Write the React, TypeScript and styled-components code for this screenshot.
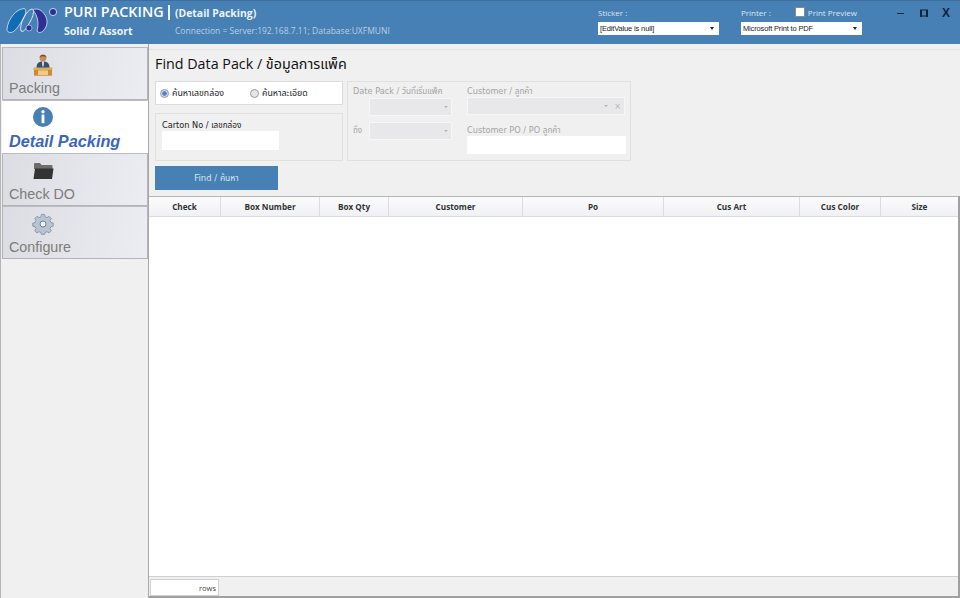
import React from "react";
import styled, { createGlobalStyle } from "styled-components";

const FONT = `"DejaVu Sans", "Noto Sans", "Noto Sans Thai", sans-serif`;

const GlobalStyle = createGlobalStyle`
  html, body {
    margin: 0;
    padding: 0;
    background: #f0f0f0;
    overflow: hidden;
  }
  * {
    box-sizing: border-box;
  }
`;

const Window = styled.div`
  width: 960px;
  height: 598px;
  display: flex;
  flex-direction: column;
  font-family: ${FONT};
  background: #f0f0f0;
`;

// Title bar
const TitleBar = styled.header`
  height: 44px;
  flex: none;
  display: flex;
  background: #4680b4;
  border-top: 1px solid #3e6f9c;
  color: #fff;
`;

const Logo = styled.svg`
  width: 52px;
  height: 28px;
  margin: 6px 0 0 6px;
  flex: none;
`;

const Brand = styled.div`
  width: 111px;
  margin-left: 6px;
  padding-top: 2px;
  flex: none;
`;

const BrandName = styled.div`
  font-family: "Open Sans", sans-serif;
  font-size: 14.4px;
  line-height: 18px;
  font-weight: 600;
  white-space: nowrap;
`;

const BrandSub = styled.div`
  font-family: "Open Sans", sans-serif;
  font-size: 10.5px;
  font-weight: 700;
  line-height: 14px;
  margin-top: 3px;
  color: #eef3f8;
  white-space: nowrap;
`;

const TitleInfo = styled.div`
  width: 423px;
  flex: none;
  padding-top: 5px;
`;

const PageName = styled.div`
  position: relative;
  font-family: "Open Sans", sans-serif;
  font-size: 10.4px;
  font-weight: 700;
  line-height: 14px;
  color: #eef3f8;
  &::before {
    content: "";
    position: absolute;
    left: -7px;
    top: -1px;
    width: 2px;
    height: 15px;
    background: #eef3f8;
  }
`;

const Connection = styled.div`
  font-family: "Open Sans", sans-serif;
  font-size: 8.5px;
  line-height: 12px;
  margin-top: 5px;
  color: #b9cfe2;
  white-space: nowrap;
`;

const Field = styled.div<{ $width: number }>`
  width: ${(p) => p.$width}px;
  flex: none;
  padding-top: 4px;
`;

const FieldHead = styled.div`
  height: 14px;
  display: flex;
  align-items: center;
  font-family: "Open Sans", sans-serif;
  font-size: 8px;
  color: #dce8f2;
  white-space: nowrap;
`;

const PreviewCheck = styled.span`
  width: 10px;
  height: 10px;
  margin: 0 3px 0 24px;
  background: #fff;
  border: 1px solid #8a8a8a;
  border-radius: 1px;
`;

const ComboBox = styled.div<{ $width: number }>`
  width: ${(p) => p.$width}px;
  height: 13px;
  margin-top: 3px;
  padding: 0 5px 0 2px;
  display: flex;
  align-items: center;
  justify-content: space-between;
  background: #fff;
  color: #222;
  font-family: "Liberation Sans", sans-serif;
  font-size: 7.5px;
  letter-spacing: -0.15px;
  white-space: nowrap;
  &::after {
    content: "";
    border-top: 3px solid #222;
    border-left: 2.5px solid transparent;
    border-right: 2.5px solid transparent;
  }
`;

const WindowButtons = styled.div`
  display: flex;
  align-items: center;
  height: 24px;
  gap: 15px;
  margin-left: 9px;
`;

const WinGlyph = styled.svg`
  width: 8px;
  height: 8px;
`;

const CloseGlyph = styled.span`
  font-family: "Liberation Sans", sans-serif;
  font-size: 12px;
  font-weight: 700;
  color: #10233a;
  margin-left: -1px;
`;

// Body
const Body = styled.div`
  flex: 1;
  min-height: 0;
  display: flex;
`;

const Sidebar = styled.nav`
  width: 148px;
  flex: none;
  padding: 3px 0 0 2px;
  background: #f0f0f0;
  border-left: 1px solid #b4b4b4;
`;

const NavItem = styled.div<{ $active?: boolean }>`
  height: 53px;
  margin-left: -1px;
  display: flex;
  flex-direction: column;
  padding: 5px 0 0 6px;
  background: ${(p) =>
    p.$active ? "#fff" : "linear-gradient(100deg, #dcdde2, #ecedf2)"};
  border-top: 1px solid #bcbcc0;
  border-bottom: ${(p) => (p.$active ? "0" : "1px solid #b4b4b8")};
  border-left: 1px solid ${(p) => (p.$active ? "#fff" : "#b4b4b8")};
  border-right: 1px solid ${(p) => (p.$active ? "#fff" : "#b4b4b8")};
`;

const NavIcon = styled.svg`
  width: 24px;
  height: 24px;
  margin-left: 22px;
  flex: none;
`;

const NavLabel = styled.span<{ $active?: boolean }>`
  font-family: "Liberation Sans", sans-serif;
  font-size: ${(p) => (p.$active ? 16.3 : 14.3)}px;
  font-weight: ${(p) => (p.$active ? 700 : 400)};
  font-style: ${(p) => (p.$active ? "italic" : "normal")};
  color: ${(p) => (p.$active ? "#3b66bd" : "#7c7c7c")};
  line-height: 18px;
  margin-top: 2px;
  white-space: nowrap;
`;

const Main = styled.main`
  flex: 1;
  min-width: 0;
  display: flex;
  flex-direction: column;
  padding-top: 5px;
  border-left: 1px solid #a8a8a8;
`;

const Finder = styled.section`
  height: 147px;
  flex: none;
  padding: 2px 0 0 6px;
  border-top: 1px solid #e2e2e2;
`;

const FinderTitle = styled.h1`
  margin: 0;
  font-family: "Open Sans", "Noto Sans Thai", sans-serif;
  font-size: 14.3px;
  font-weight: 400;
  line-height: 24px;
  color: #111;
`;

const FilterRow = styled.div`
  display: flex;
  gap: 4px;
  margin-top: 5px;
  height: 80px;
`;

const LeftColumn = styled.div`
  width: 188px;
  display: flex;
  flex-direction: column;
  gap: 8px;
`;

const RadioBox = styled.div`
  height: 24px;
  display: flex;
  align-items: center;
  padding-left: 4px;
  background: #fff;
  border: 1px solid #dcdcdc;
`;

const RadioOption = styled.label<{ $width: number }>`
  width: ${(p) => p.$width}px;
  display: flex;
  align-items: center;
  gap: 3px;
  font-size: 8.8px;
  color: #222;
  white-space: nowrap;
`;

const RadioDot = styled.span<{ $checked?: boolean }>`
  width: 9px;
  height: 9px;
  border-radius: 50%;
  background: ${(p) =>
    p.$checked
      ? "radial-gradient(circle, #5a7fd0 0 40%, #cdd6ee 50%)"
      : "#e6e6e6"};
  border: 1px solid #9a9aa2;
`;

const CartonBox = styled.div`
  flex: 1;
  padding: 5px 0 0 6px;
  border: 1px solid #e0e0e0;
`;

const FormLabel = styled.div<{ $disabled?: boolean }>`
  font-size: 8.2px;
  line-height: 12px;
  color: ${(p) => (p.$disabled ? "#a4a4a4" : "#222")};
  white-space: nowrap;
`;

const WhiteInput = styled.div<{ $width: number; $height: number }>`
  width: ${(p) => p.$width}px;
  height: ${(p) => p.$height}px;
  background: #fff;
`;

const DisabledGroup = styled.div`
  width: 284px;
  display: flex;
  padding: 3px 0 0 5px;
  border: 1px solid #e0e0e0;
`;

const DateColumn = styled.div`
  width: 114px;
  flex: none;
`;

const CustomerColumn = styled.div`
  flex: 1;
`;

const DateLine = styled.div`
  display: flex;
  align-items: center;
  height: 18px;
  margin-top: 1px;
  & + & {
    margin-top: 6px;
  }
`;

const DateLabel = styled.span`
  width: 16px;
  font-size: 8px;
  color: #a4a4a4;
`;

const DisabledSelect = styled.div<{ $width: number }>`
  width: ${(p) => p.$width}px;
  height: 18px;
  display: flex;
  align-items: center;
  justify-content: flex-end;
  gap: 6px;
  padding-right: 3px;
  background: #e8e8ea;
  border: 1px solid #f6f6f6;
  color: #b4b4b4;
  font-size: 8px;
  &::before {
    content: "";
    border-top: 2px solid #b4b4b4;
    border-left: 2px solid transparent;
    border-right: 2px solid transparent;
  }
`;

const PoLabel = styled(FormLabel)`
  margin: 9px 0 0;
`;

const FindButton = styled.button`
  display: block;
  width: 123px;
  height: 24px;
  margin-top: 5px;
  padding: 0;
  border: 0;
  background: #4680b4;
  color: #d8e6f1;
  font-family: ${FONT};
  font-size: 8.5px;
`;

// Grid
const DataGrid = styled.section`
  flex: 1;
  min-height: 0;
  display: flex;
  flex-direction: column;
  background: #fff;
  border-top: 1px solid #b4b4b4;
  border-right: 2px solid #a0a0a0;
  border-bottom: 2px solid #a0a0a0;
`;

const GridHeader = styled.div`
  height: 20px;
  flex: none;
  display: grid;
  grid-template-columns: 72px 99px 69px 134px 141px 136px 81px 1fr;
  background: linear-gradient(#fbfbfc, #f0f1f4);
  border-bottom: 1px solid #dcdcdc;
`;

const HeaderCell = styled.div`
  display: flex;
  align-items: center;
  justify-content: center;
  font-family: "Open Sans", sans-serif;
  font-size: 8.2px;
  font-weight: 700;
  color: #333;
  border-right: 1px solid #dcdcdc;
  &:last-child {
    border-right: 0;
  }
`;

const GridRows = styled.div`
  flex: 1;
`;

const GridFooter = styled.div`
  height: 20px;
  flex: none;
  padding: 2px 0 0 1px;
  background: #f0f0f0;
  border-top: 1px solid #cfcfcf;
`;

const RowCount = styled.div`
  width: 69px;
  height: 17px;
  display: flex;
  align-items: center;
  justify-content: flex-end;
  padding-right: 2px;
  background: #fff;
  border: 1px solid #d0d0d0;
  font-family: "Open Sans", sans-serif;
  font-size: 7.5px;
  color: #444;
`;

const COLUMNS = [
  "Check",
  "Box Number",
  "Box Qty",
  "Customer",
  "Po",
  "Cus Art",
  "Cus Color",
  "Size",
];

const DeskIcon = () => (
  <NavIcon viewBox="0 0 24 24">
    <circle cx="12" cy="5" r="3.4" fill="#c98d5c" />
    <path d="M8.6 4.4 C9 0.8 15 0.8 15.4 4.4 C13.5 3 10.5 3 8.6 4.4Z" fill="#7a4a26" />
    <path d="M5.5 15 C5.5 10 8 8.6 12 8.6 C16 8.6 18.5 10 18.5 15Z" fill="#33506f" />
    <path d="M11 8.6 h2 l-0.4 5 h-1.2z" fill="#e6e9ee" />
    <rect x="2.5" y="14.5" width="19" height="2.2" fill="#e0a850" />
    <rect x="3" y="16.7" width="18" height="6" fill="#c98a3a" />
    <rect x="7" y="17.4" width="10" height="4.6" fill="#efcb86" />
  </NavIcon>
);

const InfoIcon = () => (
  <NavIcon viewBox="0 0 24 24">
    <circle cx="12" cy="11" r="10" fill="#4680b4" />
    <circle cx="12" cy="5.8" r="1.7" fill="#fff" />
    <rect x="10.6" y="8.6" width="2.8" height="8.6" fill="#fff" />
  </NavIcon>
);

const FolderIcon = () => (
  <NavIcon viewBox="0 0 24 24">
    <path d="M3 8 h0 V5 a1 1 0 0 1 1-1 h5 l1.5 2 h10 a1 1 0 0 1 1 1 v3 H3z" fill="#6d6d6d" />
    <path d="M4 9.5 H22.5 L21 20 H2.5z" fill="#333" />
  </NavIcon>
);

const GearIcon = () => (
  <NavIcon viewBox="0 0 24 24">
    <path
      d="M10 1 h4 l.6 3 2.4 1 2.6-1.6 2.8 2.8-1.6 2.6 1 2.4 3 .6 v4 l-3 .6-1 2.4 1.6 2.6-2.8 2.8-2.6-1.6-2.4 1-.6 2.4 h-4 l-.6-2.4-2.4-1-2.6 1.6-2.8-2.8 1.6-2.6-1-2.4-3-.6 v-4 l3-.6 1-2.4-1.6-2.6 2.8-2.8 2.6 1.6 2.4-1z"
      transform="translate(2.4 1.6) scale(0.8)"
      fill="#b9c4d3"
      stroke="#77869a"
      strokeWidth="0.9"
    />
    <circle cx="12" cy="12" r="3" fill="#eef1f5" stroke="#6f7f93" strokeWidth="1" />
  </NavIcon>
);

const App: React.FC = () => {
  return (
    <Window>
      <GlobalStyle />
      <TitleBar>
        <Logo viewBox="0 0 52 28">
          {/* left leaf, white loop, dark leaf and the two dots */}
          <path d="M1 22 C2 12 10 2 18 1.5 C21 2 20 7 17 12 C13 19 9 25 5 25.5 C2 25.5 1 24.5 1 22Z" fill="#0f6cb5" stroke="#dbe8f4" strokeWidth="0.8" />
          <path d="M15 24 C13 18 20 3 26 2 C29 2 27 10 24 15 C21 20 18 26 15 24Z" fill="none" stroke="#e8f0f8" strokeWidth="0.9" />
          <path d="M27 3 C31 0.5 36 3 39 8 C42 13 42 19 37 24 C35 26 32 26 31 24 C33 17 32 9 27 3Z" fill="#2f2f95" stroke="#dbe8f4" strokeWidth="0.8" />
          <circle cx="23" cy="21" r="3" fill="#2f2f95" stroke="#dbe8f4" strokeWidth="0.6" />
          <circle cx="47" cy="5" r="3.6" fill="#2f2f95" stroke="#e8f0f8" strokeWidth="0.8" />
        </Logo>
        <Brand>
          <BrandName>PURI PACKING</BrandName>
          <BrandSub>Solid / Assort</BrandSub>
        </Brand>
        <TitleInfo>
          <PageName>(Detail Packing)</PageName>
          <Connection>Connection = Server:192.168.7.11; Database:UXFMUNI</Connection>
        </TitleInfo>
        <Field $width={143}>
          <FieldHead>Sticker :</FieldHead>
          <ComboBox $width={121}>[EditValue is null]</ComboBox>
        </Field>
        <Field $width={147}>
          <FieldHead>
            Printer :<PreviewCheck />
            Print Preview
          </FieldHead>
          <ComboBox $width={121}>Microsoft Print to PDF</ComboBox>
        </Field>
        <WindowButtons>
          <WinGlyph viewBox="0 0 8 8">
            <rect x="0" y="4" width="7" height="1" fill="#10233a" />
          </WinGlyph>
          <WinGlyph viewBox="0 0 8 8">
            <rect x="0.5" y="1" width="7" height="6" fill="none" stroke="#10233a" />
            <rect x="0" y="1" width="2" height="7" fill="#10233a" />
            <rect x="6" y="1" width="2" height="7" fill="#10233a" />
          </WinGlyph>
          <CloseGlyph>X</CloseGlyph>
        </WindowButtons>
      </TitleBar>
      <Body>
        <Sidebar>
          <NavItem>
            <DeskIcon />
            <NavLabel>Packing</NavLabel>
          </NavItem>
          <NavItem $active>
            <InfoIcon />
            <NavLabel $active>Detail Packing</NavLabel>
          </NavItem>
          <NavItem>
            <FolderIcon />
            <NavLabel>Check DO</NavLabel>
          </NavItem>
          <NavItem>
            <GearIcon />
            <NavLabel>Configure</NavLabel>
          </NavItem>
        </Sidebar>
        <Main>
          <Finder>
            <FinderTitle>Find Data Pack / ข้อมูลการแพ็ค</FinderTitle>
            <FilterRow>
              <LeftColumn>
                <RadioBox>
                  <RadioOption $width={90}>
                    <RadioDot $checked />
                    ค้นหาเลขกล่อง
                  </RadioOption>
                  <RadioOption $width={90}>
                    <RadioDot />
                    ค้นหาละเอียด
                  </RadioOption>
                </RadioBox>
                <CartonBox>
                  <FormLabel>Carton No / เลขกล่อง</FormLabel>
                  <WhiteInput $width={117} $height={19} />
                </CartonBox>
              </LeftColumn>
              <DisabledGroup>
                <DateColumn>
                  <FormLabel $disabled>Date Pack / วันที่เริ่มแพ็ค</FormLabel>
                  <DateLine>
                    <DateLabel />
                    <DisabledSelect $width={83} />
                  </DateLine>
                  <DateLine>
                    <DateLabel>ถึง</DateLabel>
                    <DisabledSelect $width={83} />
                  </DateLine>
                </DateColumn>
                <CustomerColumn>
                  <FormLabel $disabled>Customer / ลูกค้า</FormLabel>
                  <DisabledSelect $width={158}>×</DisabledSelect>
                  <PoLabel $disabled>Customer PO / PO ลูกค้า</PoLabel>
                  <WhiteInput $width={159} $height={18} />
                </CustomerColumn>
              </DisabledGroup>
            </FilterRow>
            <FindButton>Find / ค้นหา</FindButton>
          </Finder>
          <DataGrid>
            <GridHeader>
              {COLUMNS.map((name) => (
                <HeaderCell key={name}>{name}</HeaderCell>
              ))}
            </GridHeader>
            <GridRows />
            <GridFooter>
              <RowCount>rows</RowCount>
            </GridFooter>
          </DataGrid>
        </Main>
      </Body>
    </Window>
  );
};

export default App;
